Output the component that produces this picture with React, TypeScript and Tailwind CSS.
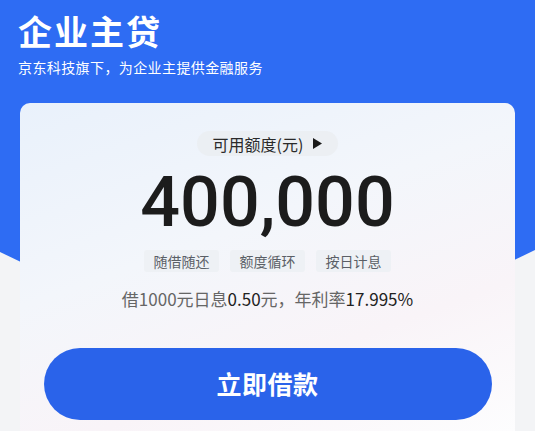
import React from "react";

export default function App() {
  const cjk = { fontFamily: '"Noto Sans CJK SC", "Noto Sans", sans-serif' } as React.CSSProperties;
  return (
    <div className="relative w-[535px] h-[431px] overflow-hidden bg-[#f3f4f6]" style={cjk}>
      <div className="absolute inset-x-0 top-0 h-[400px] bg-[#2e6cf3] [clip-path:polygon(0_0,100%_0,100%_250px,50%_380px,0_252px)]" />
      <div className="relative flex flex-col">
        <div className="pl-[18px] pt-[8px] h-[103px]">
          <div className="text-white text-[34px] font-bold leading-[46px] tracking-[2px]">企业主贷</div>
          <div className="text-white text-[14px] leading-[20px] mt-[3px] tracking-[0.4px]">京东科技旗下，为企业主提供金融服务</div>
        </div>
        <div className="mx-[20px] h-[330px] rounded-t-[10px] bg-[linear-gradient(160deg,#e9f1fb_0%,#f3f6fb_40%,#f9f4f8_70%,#fdfdfe_100%)] flex flex-col items-center">
          <div className="mt-[28px] h-[25px] px-[16px] rounded-full bg-[#e9ecef]/70 flex items-center gap-[10px] text-[16px] text-[#2a2a2a]">
            <span>可用额度(元)</span>
            <svg width="9" height="11" viewBox="0 0 9 11"><path d="M0 0 L9 5.5 L0 11 Z" fill="#1a1a1a" /></svg>
          </div>
          <div className="mt-[6px] text-[70px] leading-[80px] font-medium text-[#1c1c1c]" style={{ fontFamily: 'Roboto, "Liberation Sans", sans-serif' }}>400,000</div>
          <div className="mt-[8px] flex gap-[11px]">
            {["随借随还", "额度循环", "按日计息"].map((t) => (
              <div key={t} className="w-[75px] h-[22px] rounded-[3px] bg-[#eef1f5] text-[#5a5f66] text-[14px] flex items-center justify-center">{t}</div>
            ))}
          </div>
          <div className="mt-[14px] text-[17px] leading-[26px] text-[#666]">
            借1000元日息<span className="text-[#222]">0.50</span>元，年利率<span className="text-[#222]">17.995%</span>
          </div>
          <div className="mt-[36px] w-[448px] h-[72px] rounded-full bg-[#2a63ea] flex items-center justify-center text-white text-[25px] font-bold tracking-[0.5px]">立即借款</div>
        </div>
      </div>
    </div>
  );
}
